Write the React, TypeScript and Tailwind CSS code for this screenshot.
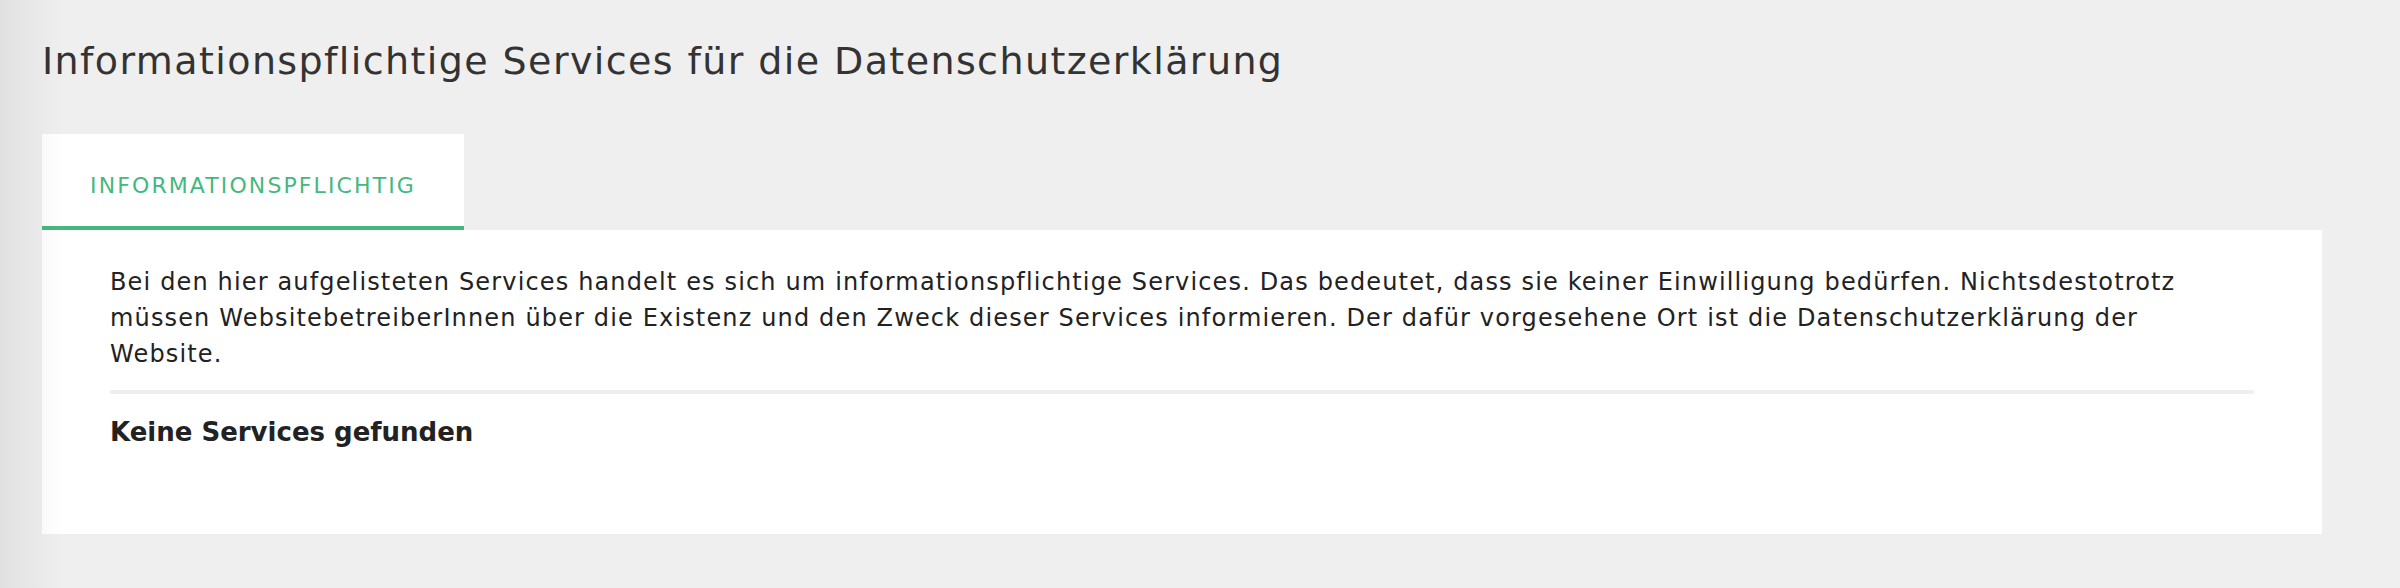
import React from "react"

const font = { fontFamily: '"DejaVu Sans", "Liberation Sans", sans-serif' }

export default function App() {
  return (
    <div
      className="relative min-h-[588px] w-full bg-[#f0eff0] pl-[42px] pr-[78px] pt-[42px] overflow-hidden"
      style={font}
    >
      {/* soft shadow along the left edge */}
      <div className="pointer-events-none absolute inset-y-0 left-0 w-[64px] bg-gradient-to-r from-black/[0.06] to-transparent" />

      <h1 className="text-[38px] leading-[38px] font-normal tracking-[1.4px] text-[#333333]">
        Informationspflichtige Services für die Datenschutzerklärung
      </h1>

      <div className="mt-[54px] flex">
        <div className="flex h-[96px] w-[422px] items-center justify-center border-b-4 border-[#45b880] bg-white pt-3 text-[22px] leading-none tracking-[2.1px] uppercase text-[#45b880]">
          Informationspflichtig
        </div>
      </div>

      <div className="bg-white px-[68px] pt-[34px] pb-[84px]">
        <p className="text-[24px] leading-[36px] tracking-[1.15px] text-[#222222]">
          Bei den hier aufgelisteten Services handelt es sich um informationspflichtige Services. Das bedeutet, dass sie keiner Einwilligung bedürfen. Nichtsdestotrotz
          <br />
          müssen WebsitebetreiberInnen über die Existenz und den Zweck dieser Services informieren. Der dafür vorgesehene Ort ist die Datenschutzerklärung der
          <br />
          Website.
        </p>
        <div className="mt-[18px] h-[4px] bg-[#efefef]" />
        <p className="mt-[20px] text-[26px] leading-[36px] font-bold text-[#222222]">
          Keine Services gefunden
        </p>
      </div>
    </div>
  )
}
